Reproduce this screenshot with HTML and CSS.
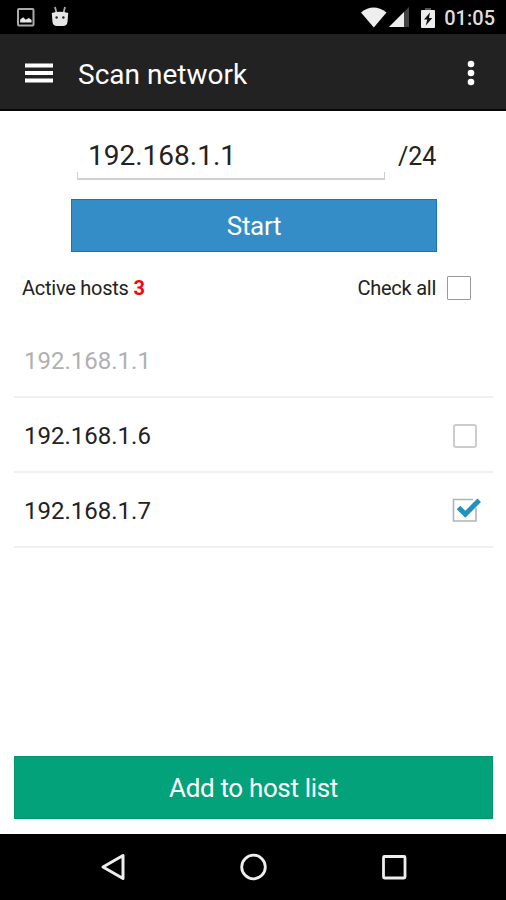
FILE: index.html
```html
<!DOCTYPE html>
<html lang="en">
<head>
  <meta charset="UTF-8" />
  <meta name="viewport" content="width=device-width, initial-scale=1.0"/>
  <title>Scan network</title>
  <link rel="stylesheet" href="styles.css">
</head>
<body>
  <div class="status-bar">
    <svg class="icon-picture" width="18" height="19" viewBox="0 0 18 19">
      <rect x="1" y="1" width="15.5" height="16.5" rx="1" fill="none" stroke="#aaa" stroke-width="2"/>
      <path d="M3.2 14.5v-3l3-2.2 2.6 2.4 3-1.8 2.8 2.2v2.4z" fill="#e8e8e8"/>
    </svg>
    <svg class="icon-robot" width="18" height="21" viewBox="0 0 18 21">
      <path d="M4 1l1.500 6M14 1l-1.500 6" stroke="#aaa" stroke-width="1.8"/>
      <path d="M.8 7Q9 4.500 17.200 7L16.500 16q-.5 4-4.500 4H6q-4 0-4.500-4z" fill="#e6e6e6"/>
      <circle cx="5.600" cy="11.500" r="1.200" fill="#222"/>
      <circle cx="12.400" cy="11.500" r="1.200" fill="#222"/>
    </svg>
    <span class="spacer"></span>
    <svg class="icon-wifi" width="26" height="21" viewBox="0 0 26 21">
      <path d="M0 5.500Q12.500-4.500 25.500 5.500L12.800 20.500z" fill="#eee"/>
    </svg>
    <svg class="icon-signal" width="20" height="20" viewBox="0 0 20 20">
      <path d="M0 20L20 0v20z" fill="#444"/>
      <path d="M0 20L15 5v15z" fill="#eee"/>
    </svg>
    <svg class="icon-battery" width="14" height="20" viewBox="0 0 14 20">
      <rect x="4" y="0" width="6" height="3" fill="#555"/>
      <rect x="0" y="2" width="14" height="18" rx="1" fill="#eee"/>
      <path d="M9 4.500L3 11.500h3.200L4.800 17.500l6.500-7.500H8z" fill="#111"/>
    </svg>
    <span class="clock">01:05</span>
  </div>

  <header class="app-bar">
    <svg class="icon-menu" width="28" height="20" viewBox="0 0 28 20">
      <path d="M0 2.500h28M0 10h28M0 17.500h28" stroke="#fff" stroke-width="3.800"/>
    </svg>
    <h1>Scan network</h1>
    <svg class="icon-more" width="8" height="26" viewBox="0 0 8 26">
      <circle cx="4" cy="4" r="3.300" fill="#fff"/>
      <circle cx="4" cy="13" r="3.300" fill="#fff"/>
      <circle cx="4" cy="22" r="3.300" fill="#fff"/>
    </svg>
  </header>

  <main>
    <div class="network">
      <div class="field">
        <input type="text" class="address" value="192.168.1.1" />
      </div>
      <span class="mask">/24</span>
    </div>
    <button class="start">Start</button>

    <div class="summary">
      <span>Active hosts <b>3</b></span>
      <label>Check all <input type="checkbox" class="box" /></label>
    </div>

    <ul class="hosts">
      <li class="disabled">192.168.1.1</li>
      <li>192.168.1.6 <input type="checkbox" class="box light" /></li>
      <li>192.168.1.7
        <svg class="checked" width="30" height="26" viewBox="0 0 30 26">
          <path d="M24 11v13H1.500V2.500H21" fill="none" stroke="#b3b3b3" stroke-width="1.600"/>
          <path d="M6.500 10.500l6.800 6.800L27.200 3.200" fill="none" stroke="#2292bd" stroke-width="5"/>
        </svg>
      </li>
    </ul>

    <button class="add">Add to host list</button>
  </main>

  <nav class="nav-bar">
    <svg width="28" height="30" viewBox="0 0 28 30">
      <path d="M24 3.500v23L4 15z" fill="none" stroke="#eee" stroke-width="3" stroke-linejoin="round"/>
    </svg>
    <svg width="28" height="30" viewBox="0 0 28 30">
      <circle cx="13.500" cy="15" r="11.800" fill="none" stroke="#eee" stroke-width="2.800"/>
    </svg>
    <svg width="28" height="30" viewBox="0 0 28 30">
      <rect x="3.500" y="4.500" width="21.500" height="21.500" rx="1" fill="none" stroke="#eee" stroke-width="2.800"/>
    </svg>
  </nav>
</body>
</html>
```

FILE: styles.css
```css
* {
  box-sizing: border-box;
}

body {
  margin: 0;
  height: 900px;
  display: flex;
  flex-direction: column;
  font-family: Roboto, sans-serif;
  background: #fff;
  color: #222;
  overflow: hidden;
}

svg {
  display: block;
  flex: none;
}

.status-bar {
  height: 34px;
  flex: none;
  display: flex;
  align-items: flex-start;
  padding: 7px 11px 0 17px;
  background: #000;
}

.icon-picture {
  margin-top: 1px;
}

.icon-robot {
  margin: -1px 0 0 16px;
}

.spacer {
  flex: 1;
}

.icon-wifi {
  margin-right: 2px;
}

.icon-signal {
  margin-right: 12px;
}

.icon-battery {
  margin-top: 1px;
}

.clock {
  margin-left: 9px;
  font-size: 20px;
  line-height: 22px;
  font-weight: 500;
  color: #ddd;
}

.app-bar {
  height: 77px;
  flex: none;
  display: flex;
  align-items: center;
  padding: 2px 31px 0 25px;
  background: #222;
  border-bottom: 2px solid #080808;
}

h1 {
  flex: 1;
  margin: 3px 0 0 25px;
  font-size: 28px;
  font-weight: 400;
  color: #fff;
}

main {
  flex: 1;
  display: flex;
  flex-direction: column;
  padding: 22px 13px 15px 14px;
}

.network {
  height: 47px;
  display: flex;
  padding-left: 63px;
}

.field {
  width: 308px;
  height: 47px;
  display: flex;
  flex-direction: column;
}

.field::after {
  content: "";
  height: 6px;
  border: 1px solid #d0d0d0;
  border-top: none;
  border-bottom-width: 2px;
}

.address {
  width: 100%;
  height: 41px;
  padding: 6px 11px 0;
  border: none;
  outline: none;
  background: none;
  font-family: inherit;
  font-size: 28px;
  color: #222;
}

.mask {
  margin-left: 13px;
  font-size: 25px;
  line-height: 48px;
}

.start,
.add {
  padding: 1px 0 0;
  border: none;
  border-radius: 0;
  font-family: inherit;
  font-size: 26px;
  letter-spacing: -0.35px;
  color: #fff;
}

.start {
  width: 366px;
  height: 53px;
  margin: 19px 0 0 57px;
  background: #358dc7;
  border: 1px solid #1478b5;
}

.summary {
  height: 71px;
  display: flex;
  justify-content: space-between;
  padding: 0 22px 0 8px;
  font-size: 20px;
  line-height: 72px;
  letter-spacing: -0.25px;
}

.summary b {
  color: #f5040f;
}

.summary label {
  display: flex;
  align-items: center;
  gap: 11px;
}

.box {
  appearance: none;
  width: 24px;
  height: 24px;
  margin: 0;
  border: 1px solid #999;
  border-radius: 1px;
  background: #fff;
}

.box.light {
  border: 2px solid #ccc;
  border-radius: 3px;
}

.hosts {
  flex: 1;
  margin: 0;
  padding: 0;
  list-style: none;
}

.hosts li {
  height: 75px;
  display: flex;
  align-items: center;
  justify-content: space-between;
  padding: 2px 16px 0 10px;
  border-bottom: 2px solid #f0f0f0;
  font-size: 24px;
}

.hosts .disabled {
  color: #b0b0b0;
}

.hosts .checked {
  margin: -2px -5px 0 0;
}

.add {
  height: 63px;
  background: #03a27b;
  border: 1px solid #04946f;
}

.nav-bar {
  height: 66px;
  flex: none;
  display: flex;
  justify-content: space-between;
  align-items: center;
  padding: 0 98px 0 99px;
  background: #000;
}
```
